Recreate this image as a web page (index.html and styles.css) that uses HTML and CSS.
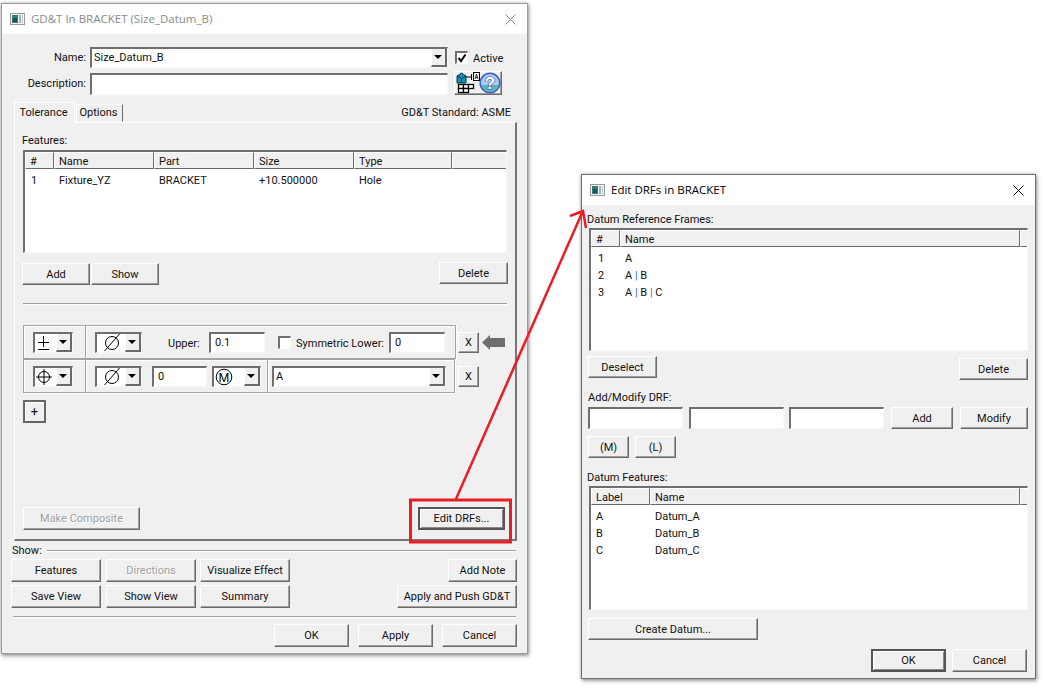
FILE: index.html
```html
<!DOCTYPE html>
<html lang="en">
<head>
    <meta charset="UTF-8">
    <meta name="viewport" content="width=device-width, initial-scale=1.0">
    <title>GD&amp;T dialogs</title>
    <link rel="stylesheet" href="styles.css">
</head>
<body>
    <svg width="0" height="0" class="defs">
        <defs>
            <symbol id="app-icon" viewBox="0 0 15 12">
                <rect x="0.5" y="0.5" width="14" height="11" fill="#f4f4f4" stroke="#9a9a9a"/>
                <rect x="2" y="2" width="6" height="8" fill="#2f7f78"/>
                <rect x="3" y="5" width="4" height="4" fill="#1d4f5c"/>
                <rect x="9" y="2" width="2" height="8" fill="#9fb8c4"/>
                <rect x="12" y="2" width="1" height="8" fill="#c8c8c8"/>
            </symbol>
            <symbol id="sym-dia" viewBox="0 0 20 20">
                <circle cx="10" cy="10" r="6.500" fill="none" stroke="#000"/>
                <path d="M2.500 18L17.500 1" stroke="#000" fill="none"/>
            </symbol>
        </defs>
    </svg>

    <!-- GD&T window -->
    <div class="window gdt-window">
        <div class="titlebar inactive">
            <svg class="app-icon"><use href="#app-icon"/></svg>
            <span class="title-text">GD&amp;T In BRACKET (Size_Datum_B)</span>
            <svg class="close-x" viewBox="0 0 11 11"><path d="M0.5 0.5L10.5 10.5M10.5 0.5L0.5 10.5" stroke="#8c8c8c" fill="none"/></svg>
        </div>

        <div class="form-row name-row">
            <label class="form-label">Name:</label>
            <div class="field combo name-combo">
                <span class="combo-text">Size_Datum_B</span>
                <span class="drop-btn"></span>
            </div>
            <span class="check checked"><svg viewBox="0 0 10 10"><path d="M1.5 5L4 8L8.5 1.5" stroke="#000" stroke-width="2" fill="none"/></svg></span>
            <span class="active-label">Active</span>
        </div>
        <div class="form-row desc-row">
            <label class="form-label">Description:</label>
            <div class="field desc-input"></div>
            <button class="btn icon-btn">
                <svg width="46" height="22" viewBox="0 0 46 22">
                    <path d="M2 4L6.500 1L11 4V11H2Z" fill="#1a8fb0" stroke="#003a55"/>
                    <path d="M2 4L6.500 6.500L11 4M6.500 6.500V11" fill="none" stroke="#003a55"/>
                    <path d="M11 5H17M16.500 2V8" stroke="#000" fill="none"/>
                    <rect x="18.500" y="0.5" width="6" height="8" fill="#fff" stroke="#000"/>
                    <path d="M20 7L21.500 2L23 7M20.500 5.500H22.500" stroke="#000" stroke-width="0.8" fill="none"/>
                    <g fill="#fff" stroke="#000" stroke-width="1.300">
                        <rect x="3.500" y="12.500" width="5" height="4"/>
                        <rect x="8.500" y="12.500" width="5" height="4"/>
                        <rect x="13.500" y="12.500" width="5" height="4"/>
                        <rect x="3.500" y="16.500" width="5" height="4"/>
                        <rect x="8.500" y="16.500" width="5" height="4"/>
                    </g>
                    <circle cx="35" cy="11" r="9.800" fill="#a9cdee" stroke="#3c62c0" stroke-width="1.600"/>
                    <path d="M26.200 13H43.800A9 9 0 0 1 26.200 13Z" fill="#64aebc"/>
                    <text x="35" y="17" class="help-mark">?</text>
                </svg>
            </button>
        </div>

        <div class="tab-row">
            <span class="tab current">Tolerance</span>
            <span class="tab">Options</span>
            <span class="standard">GD&amp;T Standard: ASME</span>
        </div>

        <div class="tab-panel">
            <div class="section-label features-label">Features:</div>
            <div class="list-box features-list">
                <table>
                    <colgroup><col class="c-num"><col class="c-wide"><col class="c-wide"><col class="c-wide"><col class="c-type"><col></colgroup>
                    <thead>
                        <tr><th>#</th><th>Name</th><th>Part</th><th>Size</th><th>Type</th><th></th></tr>
                    </thead>
                    <tbody>
                        <tr><td>1</td><td>Fixture_YZ</td><td>BRACKET</td><td>+10.500000</td><td>Hole</td><td></td></tr>
                    </tbody>
                </table>
            </div>
            <div class="feature-btns">
                <button class="btn add-btn">Add</button>
                <button class="btn show-btn">Show</button>
                <button class="btn delete-btn">Delete</button>
            </div>
            <div class="sep panel-sep"></div>

            <div class="tol-row first">
                <div class="tol-cells">
                    <div class="cell cell-sym">
                        <div class="field combo sym-combo">
                            <svg width="14" height="18" viewBox="0 0 14 18" class="sym"><path d="M7.500 2V13M2 8.500H13M2 15.500H13" stroke="#000" fill="none"/></svg>
                            <span class="drop-btn"></span>
                        </div>
                    </div>
                    <div class="cell cell-upper">
                        <div class="field combo dia-combo">
                            <svg class="sym-dia"><use href="#sym-dia"/></svg>
                            <span class="drop-btn"></span>
                        </div>
                        <span class="upper-label">Upper:</span>
                        <div class="field val-input">0.1</div>
                        <span class="check sym-check"></span>
                        <span class="sym-label">Symmetric Lower:</span>
                        <div class="field val-input">0</div>
                    </div>
                </div>
                <button class="btn x-btn">X</button>
                <svg class="row-arrow" width="23" height="15" viewBox="0 0 23 15"><path d="M0 7.5L8 0V3H23V12H8V15Z" fill="#6e6e6e"/></svg>
            </div>
            <div class="tol-row">
                <div class="tol-cells">
                    <div class="cell cell-sym">
                        <div class="field combo sym-combo">
                            <svg width="16" height="16" viewBox="0 0 16 16" class="sym"><circle cx="8" cy="8" r="5.500" fill="none" stroke="#000"/><path d="M8 0V16M0 8H16" stroke="#000" fill="none"/></svg>
                            <span class="drop-btn"></span>
                        </div>
                    </div>
                    <div class="cell cell-frame">
                        <div class="field combo dia-combo">
                            <svg class="sym-dia"><use href="#sym-dia"/></svg>
                            <span class="drop-btn"></span>
                        </div>
                        <div class="field val-input frame-val">0</div>
                        <div class="field combo mod-combo">
                            <svg width="18" height="18" viewBox="0 0 18 18" class="mod-sym"><circle cx="9" cy="9" r="7.800" fill="none" stroke="#000"/><text x="9" y="14" class="mod-mark">M</text></svg>
                            <span class="drop-btn"></span>
                        </div>
                    </div>
                    <div class="cell cell-datum">
                        <div class="field combo datum-combo">
                            <span class="combo-text">A</span>
                            <span class="drop-btn"></span>
                        </div>
                    </div>
                </div>
                <button class="btn x-btn">X</button>
            </div>
            <button class="btn plus-btn">+</button>
            <div class="panel-foot">
                <button class="btn composite-btn" disabled>Make Composite</button>
                <button class="btn default edit-btn">Edit DRFs...</button>
            </div>
        </div>

        <div class="show-head">
            <span class="show-title">Show:</span>
            <div class="sep"></div>
        </div>
        <div class="show-row">
            <button class="btn show-a">Features</button>
            <button class="btn show-b" disabled>Directions</button>
            <button class="btn show-a">Visualize Effect</button>
            <button class="btn note-btn">Add Note</button>
        </div>
        <div class="show-row second">
            <button class="btn show-a">Save View</button>
            <button class="btn show-b">Show View</button>
            <button class="btn show-a">Summary</button>
            <button class="btn push-btn">Apply and Push GD&amp;T</button>
        </div>
        <div class="sep foot-sep"></div>
        <div class="dlg-foot">
            <button class="btn">OK</button>
            <button class="btn">Apply</button>
            <button class="btn">Cancel</button>
        </div>
    </div>

    <!-- Edit DRFs window -->
    <div class="window drf-window">
        <div class="titlebar">
            <svg class="app-icon"><use href="#app-icon"/></svg>
            <span class="title-text">Edit DRFs in BRACKET</span>
            <svg class="close-x" viewBox="0 0 11 11"><path d="M0.5 0.5L10.5 10.5M10.5 0.5L0.5 10.5" stroke="#000" fill="none"/></svg>
        </div>
        <div class="drf-body">
            <div class="section-label drf-label">Datum Reference Frames:</div>
            <div class="list-box drf-list">
                <table>
                    <colgroup><col class="c-num"><col class="c-drf"><col></colgroup>
                    <thead><tr><th>#</th><th>Name</th><th></th></tr></thead>
                    <tbody>
                        <tr><td>1</td><td>A</td><td></td></tr>
                        <tr><td>2</td><td>A <i class="pipe">|</i> B</td><td></td></tr>
                        <tr><td>3</td><td>A <i class="pipe">|</i> B <i class="pipe">|</i> C</td><td></td></tr>
                    </tbody>
                </table>
            </div>
            <div class="drf-btns">
                <button class="btn deselect-btn">Deselect</button>
                <button class="btn drf-delete">Delete</button>
            </div>
            <div class="section-label modify-label">Add/Modify DRF:</div>
            <div class="modify-row">
                <div class="field drf-input"></div>
                <div class="field drf-input"></div>
                <div class="field drf-input"></div>
                <button class="btn drf-add">Add</button>
                <button class="btn drf-modify">Modify</button>
            </div>
            <div class="mod-row">
                <button class="btn">(M)</button>
                <button class="btn">(L)</button>
            </div>
            <div class="section-label features-head">Datum Features:</div>
            <div class="list-box datum-list">
                <table>
                    <colgroup><col class="c-label"><col class="c-dname"><col></colgroup>
                    <thead><tr><th>Label</th><th>Name</th><th></th></tr></thead>
                    <tbody>
                        <tr><td>A</td><td>Datum_A</td><td></td></tr>
                        <tr><td>B</td><td>Datum_B</td><td></td></tr>
                        <tr><td>C</td><td>Datum_C</td><td></td></tr>
                    </tbody>
                </table>
            </div>
            <button class="btn create-btn">Create Datum...</button>
            <div class="drf-foot">
                <button class="btn default">OK</button>
                <button class="btn">Cancel</button>
            </div>
        </div>
    </div>

    <!-- red callout drawn over both windows -->
    <svg class="callout" width="1045" height="688" viewBox="0 0 1045 688">
        <rect x="410.500" y="500" width="100" height="42" fill="none" stroke="#ed1c24" stroke-width="3"/>
        <path d="M456 499L582 213M570 216L583 211L586 228" fill="none" stroke="#ed1c24" stroke-width="2.500"/>
    </svg>
</body>
</html>
```

FILE: styles.css
```css
* {
    box-sizing: border-box;
}
html, body {
    margin: 0;
    padding: 0;
}
body {
    width: 1045px;
    height: 688px;
    position: relative;
    overflow: hidden;
    background: #fff;
    font-family: Roboto, "Liberation Sans", Arial, sans-serif;
    font-size: 11px;
    color: #111;
}
.defs {
    position: absolute;
}

/* windows */
.window {
    position: absolute;
    background: #f0f0f0;
    border: 1px solid #9c9c9c;
    box-shadow: 1px 2px 4px rgba(0, 0, 0, 0.35), 0 0 3px rgba(0, 0, 0, 0.25);
}
.gdt-window {
    left: 1px;
    top: 3px;
    width: 527px;
    height: 651px;
}
.drf-window {
    left: 581px;
    top: 174px;
    width: 455px;
    height: 505px;
    border-color: #6f6f6f;
}
.titlebar {
    display: flex;
    align-items: center;
    height: 30px;
    padding: 0 11px 0 8px;
    background: #fff;
    font-family: "Open Sans", "Liberation Sans", sans-serif;
    font-size: 11.5px;
    color: #000;
}
.titlebar.inactive {
    color: #8a8a8a;
}
.app-icon {
    width: 15px;
    height: 12px;
    margin-right: 6px;
}
.title-text {
    flex: 1;
    margin-top: -2px;
}
.close-x {
    width: 11px;
    height: 11px;
}

/* common controls */
.btn {
    display: block;
    margin: 0;
    padding: 0;
    width: 75px;
    height: 23px;
    font: inherit;
    color: #111;
    text-align: center;
    background: #f0f0f0;
    border: 1px solid;
    border-color: #fff #6a6a6a #6a6a6a #fff;
    box-shadow: inset -1px -1px 0 #a0a0a0;
}
.btn:disabled {
    color: #a0a0a0;
    text-shadow: 1px 1px 0 #fff;
}
.btn.default {
    border: 2px solid #555;
    box-shadow: inset 1px 1px 0 #fff, inset -1px -1px 0 #888;
}
.field {
    background: #fff;
    border-style: solid;
    border-width: 2px 1px 1px 2px;
    border-color: #6f6f6f #f8f8f8 #f8f8f8 #6f6f6f;
    height: 21px;
    font-size: 11px;
    line-height: 18px;
    padding-left: 4px;
    color: #111;
}
.combo {
    display: flex;
    align-items: center;
    justify-content: space-between;
}
.combo-text {
    flex: 1;
}
.drop-btn {
    position: relative;
    flex: none;
    width: 16px;
    height: 100%;
    background: #f0f0f0;
    border-right: 2px solid #6a6a6a;
    border-bottom: 2px solid #6a6a6a;
    border-left: 1px solid #fff;
}
.drop-btn::after {
    content: "";
    position: absolute;
    left: 2px;
    top: 6px;
    border-style: solid;
    border-width: 4px 4px 0 4px;
    border-color: #000 transparent transparent transparent;
}
.check {
    display: block;
    flex: none;
    width: 13px;
    height: 13px;
    background: #fff;
    border-style: solid;
    border-width: 2px 1px 1px 2px;
    border-color: #707070 #fff #fff #707070;
}
.check svg {
    display: block;
    width: 10px;
    height: 10px;
}
.sep {
    height: 2px;
    border-top: 1px solid #a0a0a0;
    border-bottom: 1px solid #fff;
}
.section-label {
    height: 14px;
    line-height: 16px;
}

/* lists */
.list-box {
    background: #fff;
    border-style: solid;
    border-width: 2px 1px 1px 2px;
    border-color: #6f6f6f #f8f8f8 #f8f8f8 #6f6f6f;
    overflow: hidden;
}
.list-box table {
    width: 100%;
    table-layout: fixed;
    border-collapse: separate;
    border-spacing: 0;
}
.list-box th {
    height: 17px;
    padding: 1px 0 0 4px;
    font-weight: normal;
    text-align: left;
    background: #f0f0f0;
    border: 1px solid;
    border-color: #fff #6a6a6a #6a6a6a #fff;
    white-space: nowrap;
}
.list-box th:last-child {
    border-right: 0;
}
.list-box td {
    height: 17px;
    padding: 0 0 0 5px;
    white-space: nowrap;
}
.list-box tbody tr:first-child td {
    height: 20px;
    padding-top: 3px;
}
.c-num { width: 29px; }
.c-wide { width: 100px; }
.c-type { width: 98px; }
.c-drf { width: 400px; }
.c-label { width: 59px; }
.c-dname { width: 370px; }
.pipe {
    font-style: normal;
    color: #2a6fb5;
}

/* GD&T form */
.form-row {
    display: flex;
    align-items: center;
}
.form-label {
    width: 84px;
    text-align: right;
}
.name-row {
    margin-top: 13px;
    height: 20px;
}
.name-combo {
    width: 358px;
    margin-left: 4px;
    padding-left: 2px;
}
.name-row .check {
    margin-left: 7px;
}
.active-label {
    margin-left: 5px;
    margin-top: 2px;
}
.desc-row {
    margin-top: 4px;
    height: 24px;
}
.desc-input {
    width: 358px;
    height: 22px;
    margin-left: 4px;
    margin-top: 2px;
}
.icon-btn {
    width: 48px;
    height: 24px;
    margin-left: 6px;
}
.icon-btn svg {
    display: block;
}
.help-mark {
    font-family: "Liberation Sans", sans-serif;
    font-size: 17px;
    font-weight: bold;
    fill: #fff;
    stroke: #2f55b0;
    stroke-width: 1.2;
    paint-order: stroke;
    text-anchor: middle;
}
.tab-row {
    position: relative;
    z-index: 1;
    display: flex;
    align-items: flex-end;
    height: 21px;
    margin-top: 7px;
    padding-left: 12px;
}
.tab {
    height: 18px;
    width: 47px;
    padding-right: 2px;
    line-height: 16px;
    text-align: center;
    background: #f0f0f0;
    border: 1px solid;
    border-color: #fff #6a6a6a #f0f0f0 #fff;
    margin-bottom: 1px;
    margin-left: 1px;
}
.tab.current {
    width: 61px;
    height: 21px;
    line-height: 20px;
    margin-left: 0;
    margin-bottom: 0;
    border-right-color: #fff;
    border-bottom: 0;
}
.standard {
    margin-left: auto;
    margin-right: 16px;
    margin-bottom: 4px;
}
.tab-panel {
    width: 503px;
    height: 419px;
    margin-top: -1px;
    margin-left: 12px;
    border-style: solid;
    border-width: 1px 2px 2px 1px;
    border-color: #fff #777 #777 #fff;
}
.features-label {
    margin: 10px 0 0 7px;
}
.features-list {
    width: 484px;
    height: 103px;
    margin: 3px 0 0 8px;
}
.features-list td:first-child {
    padding-left: 6px;
}
.feature-btns {
    display: flex;
    width: 486px;
    height: 23px;
    margin: 9px 0 0 7px;
}
.add-btn {
    width: 68px;
    height: 22px;
    margin-top: 1px;
}
.show-btn {
    width: 68px;
    height: 22px;
    margin: 1px 0 0 1px;
}
.delete-btn {
    width: 69px;
    height: 22px;
    margin-left: auto;
}
.panel-sep {
    width: 484px;
    margin: 18px 0 0 8px;
}
.tol-row {
    display: flex;
    align-items: center;
    height: 34px;
    margin-left: 8px;
}
.tol-row.first {
    margin-top: 20px;
}
.tol-cells {
    display: flex;
    width: 432px;
    height: 34px;
}
.cell {
    display: flex;
    align-items: center;
    flex: none;
    height: 34px;
    border: 1px solid #a3a3a3;
    box-shadow: inset 1px 1px 0 #fff, 1px 1px 0 #fff;
    margin-right: -1px;
    margin-bottom: -1px;
}
.cell-sym {
    width: 63px;
    padding-left: 9px;
}
.cell-upper {
    width: 371px;
    padding-left: 9px;
}
.cell-frame {
    width: 183px;
    padding-left: 9px;
}
.cell-datum {
    width: 188px;
    padding-left: 4px;
}
.sym-combo {
    width: 40px;
    padding-left: 1px;
}
.dia-combo {
    width: 47px;
    padding-left: 5px;
}
.sym-dia {
    flex: none;
    width: 20px;
    height: 20px;
}
.sym {
    flex: none;
}
.upper-label {
    width: 33px;
    margin-left: 26px;
    margin-top: 2px;
}
.val-input {
    width: 56px;
}
.cell-upper > .field:not(.combo) {
    margin-left: 8px;
}
.sym-check {
    margin-left: 13px;
}
.sym-label {
    width: 85px;
    margin-left: 5px;
    margin-top: 2px;
    white-space: nowrap;
}
.frame-val {
    width: 55px;
    margin-left: 10px;
}
.mod-combo {
    width: 49px;
    margin-left: 5px;
    padding-left: 1px;
}
.mod-sym {
    flex: none;
}
.mod-mark {
    font-family: "Liberation Sans", sans-serif;
    font-size: 13px;
    text-anchor: middle;
}
.datum-combo {
    width: 174px;
    padding-left: 2px;
}
.x-btn {
    width: 21px;
    height: 21px;
    margin-left: 3px;
}
.row-arrow {
    margin-left: 3px;
}
.plus-btn {
    width: 23px;
    height: 23px;
    margin: 7px 0 0 8px;
    border: 2px solid #666;
    box-shadow: inset 1px 1px 0 #fff;
    font-size: 13px;
}
.panel-foot {
    display: flex;
    justify-content: space-between;
    width: 482px;
    margin: 84px 0 0 8px;
}
.composite-btn {
    width: 117px;
}
.edit-btn {
    width: 87px;
}
.show-head {
    display: flex;
    align-items: center;
    height: 15px;
    margin: 2px 11px 0 10px;
}
.show-title {
    width: 35px;
}
.show-head .sep {
    flex: 1;
}
.show-row {
    display: flex;
    height: 23px;
    padding: 0 10px 0 9px;
    margin-top: 1px;
}
.show-row.second {
    margin-top: 3px;
}
.show-a {
    width: 90px;
}
.show-b {
    width: 90px;
    margin: 0 4px 0 5px;
}
.note-btn {
    width: 69px;
    margin-left: auto;
}
.push-btn {
    width: 120px;
    margin-left: auto;
}
.foot-sep {
    width: 503px;
    margin: 8px 0 0 11px;
}
.dlg-foot {
    display: flex;
    gap: 9px;
    justify-content: flex-end;
    margin-top: 6px;
    padding-right: 10px;
}

/* Edit DRFs form */
.drf-body {
    padding-left: 5px;
}
.drf-label {
    margin-top: 7px;
}
.drf-list {
    width: 439px;
    height: 123px;
    margin: 2px 0 0 2px;
}
.drf-list td:first-child {
    padding-left: 7px;
}
.drf-btns {
    display: flex;
    width: 440px;
    height: 24px;
    margin: 5px 0 0 1px;
}
.deselect-btn {
    width: 69px;
    height: 22px;
}
.drf-delete {
    width: 69px;
    height: 22px;
    margin: 2px 0 0 auto;
}
.modify-label {
    margin: 10px 0 0 1px;
}
.modify-row {
    display: flex;
    margin: 3px 0 0 1px;
}
.drf-input {
    width: 95px;
    height: 22px;
    margin-right: 6px;
}
.drf-input:nth-child(2) {
    margin-right: 5px;
}
.drf-add {
    width: 62px;
    height: 22px;
    margin-left: 1px;
}
.drf-modify {
    width: 68px;
    height: 22px;
    margin-left: 7px;
}
.mod-row {
    display: flex;
    gap: 6px;
    margin: 7px 0 0 1px;
}
.mod-row .btn {
    width: 41px;
    height: 22px;
}
.features-head {
    margin: 12px 0 0 0;
}
.datum-list {
    width: 439px;
    height: 124px;
    margin: 2px 0 0 2px;
}
.create-btn {
    width: 170px;
    height: 22px;
    margin: 8px 0 0 1px;
}
.drf-foot {
    display: flex;
    gap: 6px;
    justify-content: flex-end;
    margin-top: 9px;
    padding-right: 8px;
}

/* annotation layer */
.callout {
    position: absolute;
    left: 0;
    top: 0;
    pointer-events: none;
}
```
